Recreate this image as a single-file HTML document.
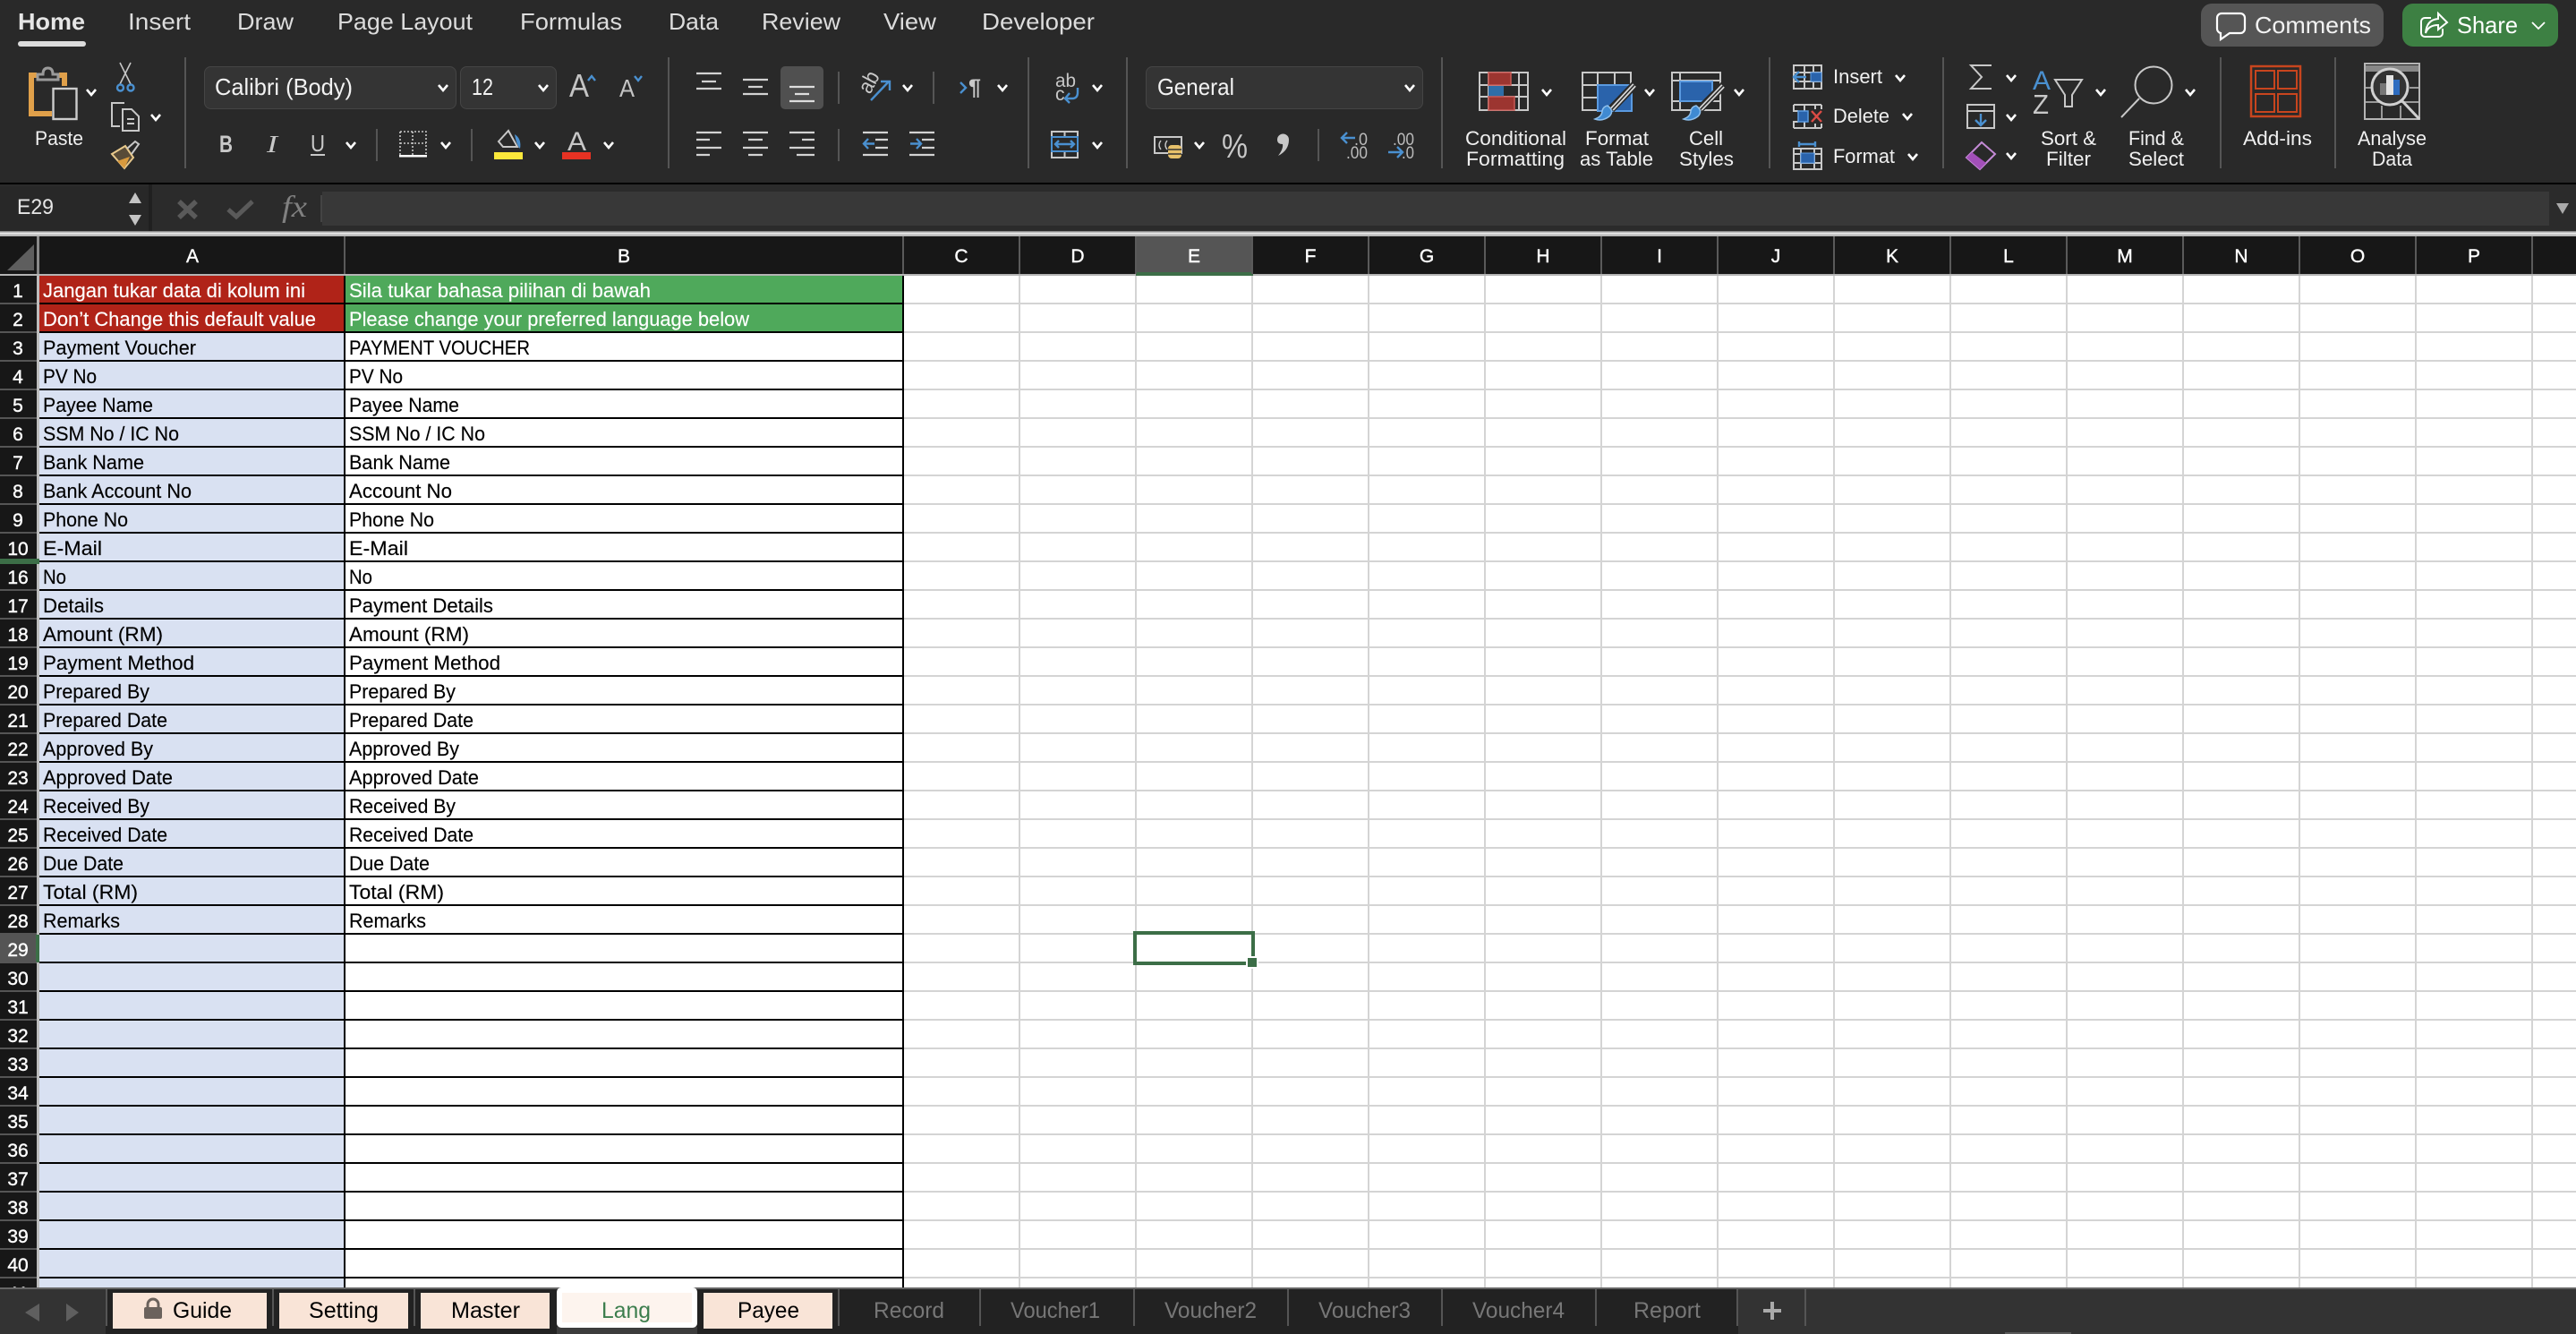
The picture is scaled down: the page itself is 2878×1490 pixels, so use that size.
<!DOCTYPE html>
<html><head><meta charset="utf-8"><title>Excel</title>
<style>
html,body{margin:0;padding:0;background:#fff;overflow:hidden}
svg{display:block}
text{font-family:"Liberation Sans",sans-serif}
.t{font-size:26px;fill:#dcdcdc;font-weight:400}
.r{font-size:22px;fill:#f0f0f0}
.c{font-size:22.5px;fill:#000;stroke:#000;stroke-width:.15}
.w{font-size:22.5px;fill:#fff;stroke:#fff;stroke-width:.15}
.h{font-size:21px;fill:#fff;text-anchor:middle;stroke:#fff;stroke-width:.4}
.s{fill:none;stroke:#c8c8c8;stroke-width:2}
.b{fill:none;stroke:#4a90d0;stroke-width:2.4}
.tb{font-size:25px;fill:#000}
.tg{font-size:25px;fill:#777}
.d{font-size:19px;fill:#bbb}
</style></head><body>
<svg xmlns="http://www.w3.org/2000/svg" width="2878" height="1490" viewBox="0 0 2878 1490">
<defs>
<path id="v" d="M-5 -3L0 3L5 -3" fill="none" stroke="#fff" stroke-width="2.6"/>
</defs>
<rect width="2878" height="1490" fill="#fff"/>

<!-- ribbon -->
<rect width="2878" height="204" fill="#292929"/>
<rect y="204" width="2878" height="2" fill="#000"/>
<rect y="206" width="2878" height="52" fill="#2b2b2b"/>
<text x="20" y="33" class="t" style="font-weight:700;fill:#e6e6e6" textLength="75" lengthAdjust="spacingAndGlyphs">Home</text>
<rect x="20" y="46" width="76" height="6" rx="3" fill="#dcdcdc"/>
<text x="143" y="33" class="t" textLength="70" lengthAdjust="spacingAndGlyphs">Insert</text>
<text x="265" y="33" class="t" textLength="63" lengthAdjust="spacingAndGlyphs">Draw</text>
<text x="377" y="33" class="t" textLength="151" lengthAdjust="spacingAndGlyphs">Page Layout</text>
<text x="581" y="33" class="t" textLength="114" lengthAdjust="spacingAndGlyphs">Formulas</text>
<text x="747" y="33" class="t" textLength="56" lengthAdjust="spacingAndGlyphs">Data</text>
<text x="851" y="33" class="t" textLength="88" lengthAdjust="spacingAndGlyphs">Review</text>
<text x="987" y="33" class="t" textLength="59" lengthAdjust="spacingAndGlyphs">View</text>
<text x="1097" y="33" class="t" textLength="126" lengthAdjust="spacingAndGlyphs">Developer</text>

<!-- comments/share -->
<rect x="2459" y="4" width="204" height="48" rx="12" fill="#555"/>
<path d="M2482 15H2503a5 5 0 0 1 5 5V32a5 5 0 0 1-5 5H2491L2481 44V37a5 5 0 0 1-4-5V20a5 5 0 0 1 5-5Z" fill="none" stroke="#fff" stroke-width="2.2"/>
<text x="2519" y="37" style="font-size:26px;fill:#f2f2f2" textLength="130" lengthAdjust="spacingAndGlyphs">Comments</text>
<rect x="2684" y="4" width="174" height="48" rx="12" fill="#3d8043"/>
<path d="M2716 20H2709a4 4 0 0 0-4 4V37a4 4 0 0 0 4 4H2725a4 4 0 0 0 4-4V32" fill="none" stroke="#fff" stroke-width="2"/>
<path d="M2724 15L2734 25L2724 33V28Q2713 28 2710 37Q2711 22 2724 21Z" fill="none" stroke="#fff" stroke-width="2"/>
<text x="2745" y="37" style="font-size:26px;fill:#fff" textLength="68" lengthAdjust="spacingAndGlyphs">Share</text>
<path d="M2829 25L2836 32L2843 25" fill="none" stroke="#fff" stroke-width="1.8"/>

<!-- separators -->
<g fill="#555">
<rect x="206" y="64" width="2" height="124"/><rect x="746" y="64" width="2" height="124"/>
<rect x="1148" y="64" width="2" height="124"/><rect x="1258" y="64" width="2" height="124"/>
<rect x="1610" y="64" width="2" height="124"/><rect x="1976" y="64" width="2" height="124"/>
<rect x="2170" y="64" width="2" height="124"/><rect x="2480" y="64" width="2" height="124"/>
<rect x="2608" y="64" width="2" height="124"/>
<rect x="420" y="144" width="2" height="36"/><rect x="526" y="144" width="2" height="36"/>
<rect x="936" y="80" width="2" height="36"/><rect x="936" y="144" width="2" height="36"/>
<rect x="1042" y="80" width="2" height="36"/><rect x="1472" y="144" width="2" height="36"/>
</g>

<!-- paste -->
<path d="M41 84H35V127H58M66 84H72V96" fill="none" stroke="#e0a04a" stroke-width="6"/>
<path d="M42 89V83H48Q48 76 53.500 76Q59 76 59 83H65V89Z" fill="none" stroke="#9a9a9a" stroke-width="3"/>
<rect x="59.500" y="99" width="26" height="34" fill="#292929" stroke="#ccc" stroke-width="2.4"/>
<use href="#v" x="102" y="103"/>
<text x="39" y="162" class="r" textLength="54" lengthAdjust="spacingAndGlyphs">Paste</text>
<path d="M134 70L146 94M146 70L134 94" fill="none" stroke="#c8c8c8" stroke-width="1.6"/>
<circle cx="134.500" cy="98" r="3.500" class="b"/><circle cx="146" cy="98" r="3.500" class="b"/>
<path d="M139 115H125V141H134M137 122H147L155 130V146H137ZM142 133H150M142 138H150" class="s"/>
<use href="#v" x="174" y="131"/>
<path d="M125 172L140 163L149 176L139 188Z" fill="#e6b469" fill-opacity=".25" stroke="#e8c98c" stroke-width="2"/>
<path d="M131 180L145 175L139 188Z" fill="#d99a3d"/>
<path d="M142 166L151 158L155 161L147 172" class="s"/>

<!-- font -->
<rect x="228.500" y="74.500" width="281" height="47" rx="7" fill="#343434" stroke="#454545"/>
<rect x="514.500" y="74.500" width="107" height="47" rx="7" fill="#343434" stroke="#454545"/>
<text x="240" y="106" style="font-size:26px;fill:#f2f2f2" textLength="154" lengthAdjust="spacingAndGlyphs">Calibri (Body)</text>
<text x="527" y="106" style="font-size:26px;fill:#f2f2f2" textLength="24" lengthAdjust="spacingAndGlyphs">12</text>
<use href="#v" x="495" y="98"/><use href="#v" x="607" y="98"/>
<text x="636" y="108" style="font-size:36px;fill:#c4c4c4" textLength="22" lengthAdjust="spacingAndGlyphs">A</text>
<path d="M657 90L661 85L665 90" class="b"/>
<text x="692" y="108" style="font-size:28px;fill:#c4c4c4" textLength="17" lengthAdjust="spacingAndGlyphs">A</text>
<path d="M709 85L713 90L717 85" class="b"/>
<text x="245" y="170" style="font-size:27px;font-weight:700;fill:#c8c8c8" textLength="15" lengthAdjust="spacingAndGlyphs">B</text>
<text x="298" y="170" style="font-size:27px;font-style:italic;fill:#c8c8c8;font-family:'Liberation Serif',serif" textLength="12" lengthAdjust="spacingAndGlyphs">I</text>
<text x="347" y="169" style="font-size:26px;fill:#c8c8c8" textLength="16" lengthAdjust="spacingAndGlyphs">U</text>
<rect x="347" y="172" width="16" height="2" fill="#c8c8c8"/>
<use href="#v" x="392" y="162"/>
<path d="M447 147H476V173M447 147V173M461 147V173M447 160H476" fill="none" stroke="#c8c8c8" stroke-width="1.600" stroke-dasharray="2 2"/>
<rect x="446" y="173" width="31" height="2.500" fill="#fff"/>
<use href="#v" x="498" y="162"/>
<path d="M557 158L568 146L578 164H562Z" class="s"/>
<path d="M575 150Q583 155 581 166Q577 162 575 150Z" fill="#4a90d0"/>
<rect x="552" y="170" width="32" height="8" fill="#fbe83b"/>
<use href="#v" x="603" y="162"/>
<text x="634" y="168" style="font-size:30px;fill:#c8c8c8" textLength="21" lengthAdjust="spacingAndGlyphs">A</text>
<rect x="628" y="170" width="32" height="8" fill="#e63223"/>
<use href="#v" x="680" y="162"/>

<!-- alignment -->
<g stroke="#d2d2d2" stroke-width="2.200" fill="none">
<path d="M778 82H806M784 91H800M778 99H806"/>
<path d="M830 89H858M836 97H852M830 105H858"/>
<path d="M778 148H806M778 156H793M778 165H806M778 173H793"/>
<path d="M830 148H858M836 156H852M830 165H858M836 173H852"/>
<path d="M882 148H910M896 156H910M882 165H910M890 173H910"/>
<path d="M964 148H992M978 156H992M978 165H992M964 173H992"/>
<path d="M1016 148H1044M1030 156H1044M1030 165H1044M1016 173H1044"/>
</g>
<rect x="872" y="74" width="48" height="48" rx="5" fill="#505050"/>
<path d="M882 97H910M888 105H904M882 113H910" stroke="#ddd" stroke-width="2.200"/>
<path d="M977 160.500H965M970 155L965 160.500L970 166M1017 160.500H1029M1024 155L1029 160.500L1024 166" class="b"/>
<text transform="translate(972,106) rotate(-62)" style="font-size:24px;fill:#c8c8c8" textLength="24" lengthAdjust="spacingAndGlyphs">ab</text>
<path d="M973 112L993 91M984 91H994V101" class="b"/>
<use href="#v" x="1014" y="98"/>
<path d="M1073 92L1079 98L1073 104" class="b"/>
<text x="1082" y="106" style="font-size:25px;fill:#c8c8c8;font-weight:700" textLength="14" lengthAdjust="spacingAndGlyphs">¶</text>
<use href="#v" x="1120" y="98"/>
<text x="1179" y="97" style="font-size:21px;fill:#c8c8c8" textLength="23" lengthAdjust="spacingAndGlyphs">ab</text>
<text x="1179" y="112" style="font-size:21px;fill:#c8c8c8">c</text>
<path d="M1204 98V103Q1204 110 1198 110H1190M1195 104L1190 110L1195 115" class="b"/>
<use href="#v" x="1226" y="98"/>
<path d="M1175 147H1204V176H1175ZM1189.500 147V153M1189.500 169V176" class="s"/>
<rect x="1175" y="153" width="29" height="16" fill="none" stroke="#4a90d0" stroke-width="2"/>
<path d="M1179 161H1200M1183 157L1179 161L1183 165M1196 157L1200 161L1196 165" class="b" stroke-width="1.800"/>
<use href="#v" x="1226" y="162"/>

<!-- number -->
<rect x="1280.500" y="74.500" width="309" height="47" rx="7" fill="#343434" stroke="#454545"/>
<text x="1293" y="106" style="font-size:26px;fill:#f2f2f2" textLength="86" lengthAdjust="spacingAndGlyphs">General</text>
<use href="#v" x="1575" y="98"/>
<path d="M1290 153H1320V171H1290Z" class="s"/>
<path d="M1297 157Q1293 162 1297 167M1304 157Q1300 162 1304 167" fill="none" stroke="#c8c8c8" stroke-width="1.400"/>
<rect x="1305" y="162" width="15" height="15" rx="4" fill="#e6c06a"/>
<path d="M1305 167H1320M1305 172H1320" stroke="#333" stroke-width="1.500"/>
<use href="#v" x="1340" y="162"/>
<text x="1365" y="176" style="font-size:38px;fill:#c8c8c8" textLength="29" lengthAdjust="spacingAndGlyphs">%</text>
<path d="M1427 156a6.500 6.500 0 1 1 13 0Q1440 168 1428 174Q1434 166 1433 161Q1427 161 1427 156Z" fill="#c8c8c8"/>
<path d="M1514 154H1499M1505 148L1499 154L1505 160" class="b"/>
<text x="1513" y="162" class="d" textLength="15" lengthAdjust="spacingAndGlyphs">.0</text>
<text x="1504" y="177" class="d" textLength="24" lengthAdjust="spacingAndGlyphs">.00</text>
<text x="1556" y="162" class="d" textLength="24" lengthAdjust="spacingAndGlyphs">.00</text>
<path d="M1551 170H1567M1561 164L1567 170L1561 176" class="b"/>
<text x="1566" y="177" class="d" textLength="14" lengthAdjust="spacingAndGlyphs">.0</text>

<!-- styles -->
<path d="M1653 81H1707V123H1653ZM1663 81V123M1697 81V123M1653 95H1707M1653 108H1707" class="s"/>
<rect x="1663" y="81" width="25" height="14" fill="#9c3530" stroke="#c85a55" stroke-width="1.500"/>
<rect x="1663" y="96" width="17" height="12" fill="#2f6ea8"/>
<rect x="1663" y="108" width="29" height="15" fill="#9c3530" stroke="#c85a55" stroke-width="1.500"/>
<use href="#v" x="1728" y="103"/>
<text x="1637" y="162" class="r" textLength="113" lengthAdjust="spacingAndGlyphs">Conditional</text>
<text x="1638" y="185" class="r" textLength="110" lengthAdjust="spacingAndGlyphs">Formatting</text>

<path d="M1768 81H1822V123H1768ZM1785 81V123M1804 81V123M1768 95H1822M1768 109H1822" class="s"/>
<rect x="1785" y="95" width="38" height="29" fill="#2a63ab" stroke="#5a9ae0" stroke-width="2"/>
<path d="M1827 94L1800 122" stroke="#292929" stroke-width="9"/>
<path d="M1826 95L1801 122" stroke="#d6d6d6" stroke-width="5"/>
<path d="M1826 95L1801 122" stroke="#292929" stroke-width="1.600"/>
<path d="M1796 118Q1804 124 1798 130Q1790 136 1782 133Q1790 130 1790 124Q1791 119 1796 118Z" fill="#3f8ad2" stroke="#8fc0ec" stroke-width="1.500"/>
<use href="#v" x="1843" y="103"/>
<text x="1771" y="162" class="r" textLength="71" lengthAdjust="spacingAndGlyphs">Format</text>
<text x="1765" y="185" class="r" textLength="82" lengthAdjust="spacingAndGlyphs">as Table</text>

<path d="M1868 81H1922V123H1868ZM1877 81V123M1868 113H1922M1868 90H1922" class="s"/>
<rect x="1877" y="91" width="36" height="22" fill="#2a63ab" stroke="#5a9ae0" stroke-width="2"/>
<path d="M1926 95L1899 122" stroke="#292929" stroke-width="9"/>
<path d="M1925 96L1900 122" stroke="#d6d6d6" stroke-width="5"/>
<path d="M1925 96L1900 122" stroke="#292929" stroke-width="1.600"/>
<path d="M1895 118Q1903 124 1897 130Q1889 136 1881 133Q1889 130 1889 124Q1890 119 1895 118Z" fill="#3f8ad2" stroke="#8fc0ec" stroke-width="1.500"/>
<use href="#v" x="1943" y="103"/>
<text x="1887" y="162" class="r" textLength="38" lengthAdjust="spacingAndGlyphs">Cell</text>
<text x="1876" y="185" class="r" textLength="61" lengthAdjust="spacingAndGlyphs">Styles</text>

<!-- cells group -->
<path d="M2004 73H2035V99H2004ZM2016 73V99M2026 73V99M2004 81H2035M2004 91H2035" class="s"/>
<rect x="2023" y="81" width="12" height="10" fill="#2a63ab" stroke="#5a9ae0"/>
<path d="M2018 86H2004M2010 80L2004 86L2010 92" class="b"/>
<text x="2048" y="93" class="r" textLength="55" lengthAdjust="spacingAndGlyphs">Insert</text><use href="#v" x="2123" y="87"/>
<path d="M2004 117H2035M2004 143H2035M2004 117V124H2009M2004 143V136H2009M2016 117V124M2016 136V143M2028 117V122M2028 138V143M2035 117V122M2035 138V143" class="s"/>
<rect x="2009" y="124" width="11" height="12" fill="#2a63ab" stroke="#5a9ae0" stroke-width="1.500"/>
<path d="M2024 124L2035 136M2035 124L2024 136" stroke="#dc4b45" stroke-width="2.400"/>
<text x="2048" y="137" class="r" textLength="63" lengthAdjust="spacingAndGlyphs">Delete</text><use href="#v" x="2131" y="130"/>
<path d="M2004 166H2035V189H2004ZM2012 166V189M2027 166V189M2004 172H2035M2004 182H2035" class="s"/>
<rect x="2012" y="171" width="15" height="11" fill="#2a63ab" stroke="#5a9ae0"/>
<path d="M2010 161H2028M2010 158V164M2028 158V164" class="b" stroke-width="1.800"/>
<text x="2048" y="182" class="r" textLength="69" lengthAdjust="spacingAndGlyphs">Format</text><use href="#v" x="2137" y="175"/>

<!-- editing -->
<path d="M2225 73H2202L2214 86L2202 99H2225" class="s"/>
<use href="#v" x="2247" y="87"/>
<path d="M2198 117H2228V143H2198ZM2198 124H2228" class="s"/>
<path d="M2213 127V140M2207 134L2213 140L2219 134" class="b"/>
<use href="#v" x="2247" y="131"/>
<path d="M2214 159L2229 172L2212 189L2197 176Z" fill="none" stroke="#c48ad6" stroke-width="2"/>
<path d="M2203 170L2219 182L2212 189L2197 176Z" fill="#a24fb8"/>
<use href="#v" x="2247" y="174"/>
<text x="2271" y="100" style="font-size:30px;fill:#4a90d0" textLength="20" lengthAdjust="spacingAndGlyphs">A</text>
<text x="2271" y="127" style="font-size:31px;fill:#c8c8c8" textLength="18" lengthAdjust="spacingAndGlyphs">Z</text>
<path d="M2296 89H2326L2315 106V119H2307V106Z" class="s"/>
<use href="#v" x="2347" y="103"/>
<text x="2280" y="162" class="r" textLength="62" lengthAdjust="spacingAndGlyphs">Sort &amp;</text>
<text x="2286" y="185" class="r" textLength="50" lengthAdjust="spacingAndGlyphs">Filter</text>
<circle cx="2406" cy="95" r="20.500" class="s"/>
<path d="M2390 110L2370 131" class="s"/>
<use href="#v" x="2447" y="103"/>
<text x="2378" y="162" class="r" textLength="62" lengthAdjust="spacingAndGlyphs">Find &amp;</text>
<text x="2378" y="185" class="r" textLength="62" lengthAdjust="spacingAndGlyphs">Select</text>

<!-- add-ins / analyse -->
<rect x="2515" y="74" width="55" height="56" fill="none" stroke="#c8451e" stroke-width="2.500"/>
<g fill="none" stroke="#c8451e" stroke-width="2">
<rect x="2520" y="79" width="21" height="20"/><rect x="2545" y="79" width="21" height="20"/>
<rect x="2520" y="105" width="21" height="20"/><rect x="2545" y="105" width="21" height="20"/>
</g>
<text x="2506" y="162" class="r" textLength="77" lengthAdjust="spacingAndGlyphs">Add-ins</text>
<rect x="2642" y="71" width="61" height="62" fill="none" stroke="#b5b5b5" stroke-width="2"/>
<rect x="2643" y="73" width="59" height="7" fill="#888"/>
<path d="M2643 98H2650M2692 98H2702M2643 114H2702M2661 118V132M2682 118V132" stroke="#999" stroke-width="2"/>
<circle cx="2670" cy="97" r="20" fill="#333" stroke="#d0d0d0" stroke-width="3"/>
<rect x="2659" y="93" width="7" height="13" fill="#777"/>
<rect x="2666" y="84" width="8" height="22" fill="#e4e4e4"/>
<rect x="2674" y="89" width="7" height="17" fill="#2d6cc0"/>
<path d="M2684 113L2703 133" stroke="#d0d0d0" stroke-width="3"/>
<text x="2634" y="162" class="r" textLength="77" lengthAdjust="spacingAndGlyphs">Analyse</text>
<text x="2650" y="185" class="r" textLength="45" lengthAdjust="spacingAndGlyphs">Data</text>

<!-- formula bar -->
<rect x="0" y="208" width="166" height="50" fill="#282828"/>
<rect x="166" y="206" width="4" height="52" fill="#202020"/>
<text x="19" y="239" style="font-size:24px;fill:#e6e6e6" textLength="41" lengthAdjust="spacingAndGlyphs">E29</text>
<path d="M151 215L158 227H144Z" fill="#c4c4c4"/><path d="M151 252L158 240H144Z" fill="#c4c4c4"/>
<path d="M200 225L219 243M219 225L200 243" stroke="#5a5a5a" stroke-width="5.500"/>
<path d="M255 234L264 242L282 225" stroke="#5a5a5a" stroke-width="5" fill="none"/>
<text x="315" y="242" style="font-family:'Liberation Serif',serif;font-style:italic;font-size:34px;fill:#808080" textLength="28" lengthAdjust="spacingAndGlyphs">fx</text>
<rect x="358" y="218" width="2" height="30" fill="#444"/>
<rect x="360" y="214" width="2488" height="38" fill="#383838"/>
<path d="M2856 227H2870L2863 239Z" fill="#aaa"/>

<!-- line above headers -->
<rect y="258" width="2878" height="1.500" fill="#8a8a8a"/>
<rect y="259.500" width="2878" height="2" fill="#e8e8e8"/>
<rect y="261.500" width="2878" height="2.500" fill="#bbb"/>

<!-- column header -->
<rect y="264" width="2878" height="42" fill="#171717"/>
<rect x="1270" y="264" width="130" height="42" fill="#555"/>
<rect y="306" width="2878" height="2" fill="#b4b4b4"/>
<rect x="1269" y="304" width="131" height="4" fill="#3c6e47"/>
<path d="M8 302L38 273V302Z" fill="#5e5e5e"/>
<g fill="#5a5a5a">
<rect x="41" y="264" width="3" height="42" fill="#8a8a8a"/>
<rect x="384" y="264" width="2" height="42"/><rect x="1008" y="264" width="2" height="42"/>
<rect x="1138" y="264" width="2" height="42"/><rect x="1268" y="264" width="2" height="42"/>
<rect x="1398" y="264" width="2" height="42"/><rect x="1528" y="264" width="2" height="42"/>
<rect x="1658" y="264" width="2" height="42"/><rect x="1788" y="264" width="2" height="42"/>
<rect x="1918" y="264" width="2" height="42"/><rect x="2048" y="264" width="2" height="42"/>
<rect x="2178" y="264" width="2" height="42"/><rect x="2308" y="264" width="2" height="42"/>
<rect x="2438" y="264" width="2" height="42"/><rect x="2568" y="264" width="2" height="42"/>
<rect x="2698" y="264" width="2" height="42"/><rect x="2828" y="264" width="2" height="42"/>
</g>
<g>
<text x="215" y="293" class="h">A</text><text x="697" y="293" class="h">B</text>
<text x="1074" y="293" class="h">C</text><text x="1204" y="293" class="h">D</text>
<text x="1334" y="293" class="h">E</text><text x="1464" y="293" class="h">F</text>
<text x="1594" y="293" class="h">G</text><text x="1724" y="293" class="h">H</text>
<text x="1854" y="293" class="h">I</text><text x="1984" y="293" class="h">J</text>
<text x="2114" y="293" class="h">K</text><text x="2244" y="293" class="h">L</text>
<text x="2374" y="293" class="h">M</text><text x="2504" y="293" class="h">N</text>
<text x="2634" y="293" class="h">O</text><text x="2764" y="293" class="h">P</text>
</g>

<!-- row header column -->
<rect y="308" width="41" height="1130" fill="#171717"/>
<rect x="41" y="308" width="3" height="1130" fill="#bdbdbd"/>
<rect y="1044" width="40" height="31" fill="#555"/>
<rect x="40" y="1044" width="4" height="31" fill="#3c6e47"/>
<path stroke="#555" stroke-width="2" fill="none" d="M0 339H41M0 371H41M0 403H41M0 435H41M0 467H41M0 499H41M0 531H41M0 563H41M0 595H41M0 659H41M0 691H41M0 723H41M0 755H41M0 787H41M0 819H41M0 851H41M0 883H41M0 915H41M0 947H41M0 979H41M0 1011H41M0 1043H41M0 1075H41M0 1107H41M0 1139H41M0 1171H41M0 1203H41M0 1235H41M0 1267H41M0 1299H41M0 1331H41M0 1363H41M0 1395H41M0 1427H41"/>
<rect y="624" width="44" height="6" fill="#3c6e47"/>
<g>
<text x="20" y="332" class="h">1</text><text x="20" y="364" class="h">2</text><text x="20" y="396" class="h">3</text>
<text x="20" y="428" class="h">4</text><text x="20" y="460" class="h">5</text><text x="20" y="492" class="h">6</text>
<text x="20" y="524" class="h">7</text><text x="20" y="556" class="h">8</text><text x="20" y="588" class="h">9</text>
<text x="20" y="620" class="h">10</text><text x="20" y="652" class="h">16</text><text x="20" y="684" class="h">17</text>
<text x="20" y="716" class="h">18</text><text x="20" y="748" class="h">19</text><text x="20" y="780" class="h">20</text>
<text x="20" y="812" class="h">21</text><text x="20" y="844" class="h">22</text><text x="20" y="876" class="h">23</text>
<text x="20" y="908" class="h">24</text><text x="20" y="940" class="h">25</text><text x="20" y="972" class="h">26</text>
<text x="20" y="1004" class="h">27</text><text x="20" y="1036" class="h">28</text><text x="20" y="1068" class="h">29</text>
<text x="20" y="1100" class="h">30</text><text x="20" y="1132" class="h">31</text><text x="20" y="1164" class="h">32</text>
<text x="20" y="1196" class="h">33</text><text x="20" y="1228" class="h">34</text><text x="20" y="1260" class="h">35</text>
<text x="20" y="1292" class="h">36</text><text x="20" y="1324" class="h">37</text><text x="20" y="1356" class="h">38</text>
<text x="20" y="1388" class="h">39</text><text x="20" y="1420" class="h">40</text><text x="20" y="1452" class="h">41</text>
</g>

<!-- grid -->
<path stroke="#d4d4d4" stroke-width="2" fill="none" d="M1010 339H2878M1010 371H2878M1010 403H2878M1010 435H2878M1010 467H2878M1010 499H2878M1010 531H2878M1010 563H2878M1010 595H2878M1010 627H2878M1010 659H2878M1010 691H2878M1010 723H2878M1010 755H2878M1010 787H2878M1010 819H2878M1010 851H2878M1010 883H2878M1010 915H2878M1010 947H2878M1010 979H2878M1010 1011H2878M1010 1043H2878M1010 1075H2878M1010 1107H2878M1010 1139H2878M1010 1171H2878M1010 1203H2878M1010 1235H2878M1010 1267H2878M1010 1299H2878M1010 1331H2878M1010 1363H2878M1010 1395H2878M1010 1427H2878M1139 308V1438M1269 308V1438M1399 308V1438M1529 308V1438M1659 308V1438M1789 308V1438M1919 308V1438M2049 308V1438M2179 308V1438M2309 308V1438M2439 308V1438M2569 308V1438M2699 308V1438M2829 308V1438"/>

<!-- A/B cells -->
<rect x="44" y="308" width="340" height="63" fill="#b02318"/>
<rect x="386" y="308" width="622" height="63" fill="#4fa95b"/>
<rect x="44" y="371" width="340" height="1067" fill="#d9e1f2"/>
<rect x="386" y="371" width="622" height="1067" fill="#fff"/>
<path stroke="#000" stroke-width="2" fill="none" d="M44 339H1009M44 371H1009M44 403H1009M44 435H1009M44 467H1009M44 499H1009M44 531H1009M44 563H1009M44 595H1009M44 627H1009M44 659H1009M44 691H1009M44 723H1009M44 755H1009M44 787H1009M44 819H1009M44 851H1009M44 883H1009M44 915H1009M44 947H1009M44 979H1009M44 1011H1009M44 1043H1009M44 1075H1009M44 1107H1009M44 1139H1009M44 1171H1009M44 1203H1009M44 1235H1009M44 1267H1009M44 1299H1009M44 1331H1009M44 1363H1009M44 1395H1009M44 1427H1009M385 308V1438M1009 308V1438"/>

<text x="48" y="332" class="w" textLength="293" lengthAdjust="spacingAndGlyphs">Jangan tukar data di kolum ini</text>
<text x="48" y="364" class="w" textLength="305" lengthAdjust="spacingAndGlyphs">Don’t Change this default value</text>
<text x="48" y="396" class="c" textLength="171" lengthAdjust="spacingAndGlyphs">Payment Voucher</text>
<text x="48" y="428" class="c" textLength="60" lengthAdjust="spacingAndGlyphs">PV No</text>
<text x="48" y="460" class="c" textLength="123" lengthAdjust="spacingAndGlyphs">Payee Name</text>
<text x="48" y="492" class="c" textLength="152" lengthAdjust="spacingAndGlyphs">SSM No / IC No</text>
<text x="48" y="524" class="c" textLength="113" lengthAdjust="spacingAndGlyphs">Bank Name</text>
<text x="48" y="556" class="c" textLength="166" lengthAdjust="spacingAndGlyphs">Bank Account No</text>
<text x="48" y="588" class="c" textLength="95" lengthAdjust="spacingAndGlyphs">Phone No</text>
<text x="48" y="620" class="c" textLength="66" lengthAdjust="spacingAndGlyphs">E-Mail</text>
<text x="48" y="652" class="c" textLength="26" lengthAdjust="spacingAndGlyphs">No</text>
<text x="48" y="684" class="c" textLength="68" lengthAdjust="spacingAndGlyphs">Details</text>
<text x="48" y="716" class="c" textLength="134" lengthAdjust="spacingAndGlyphs">Amount (RM)</text>
<text x="48" y="748" class="c" textLength="169" lengthAdjust="spacingAndGlyphs">Payment Method</text>
<text x="48" y="780" class="c" textLength="119" lengthAdjust="spacingAndGlyphs">Prepared By</text>
<text x="48" y="812" class="c" textLength="139" lengthAdjust="spacingAndGlyphs">Prepared Date</text>
<text x="48" y="844" class="c" textLength="123" lengthAdjust="spacingAndGlyphs">Approved By</text>
<text x="48" y="876" class="c" textLength="145" lengthAdjust="spacingAndGlyphs">Approved Date</text>
<text x="48" y="908" class="c" textLength="119" lengthAdjust="spacingAndGlyphs">Received By</text>
<text x="48" y="940" class="c" textLength="139" lengthAdjust="spacingAndGlyphs">Received Date</text>
<text x="48" y="972" class="c" textLength="90" lengthAdjust="spacingAndGlyphs">Due Date</text>
<text x="48" y="1004" class="c" textLength="106" lengthAdjust="spacingAndGlyphs">Total (RM)</text>
<text x="48" y="1036" class="c" textLength="86" lengthAdjust="spacingAndGlyphs">Remarks</text>

<text x="390" y="332" class="w" textLength="337" lengthAdjust="spacingAndGlyphs">Sila tukar bahasa pilihan di bawah</text>
<text x="390" y="364" class="w" textLength="447" lengthAdjust="spacingAndGlyphs">Please change your preferred language below</text>
<text x="390" y="396" class="c" textLength="202" lengthAdjust="spacingAndGlyphs">PAYMENT VOUCHER</text>
<text x="390" y="428" class="c" textLength="60" lengthAdjust="spacingAndGlyphs">PV No</text>
<text x="390" y="460" class="c" textLength="123" lengthAdjust="spacingAndGlyphs">Payee Name</text>
<text x="390" y="492" class="c" textLength="152" lengthAdjust="spacingAndGlyphs">SSM No / IC No</text>
<text x="390" y="524" class="c" textLength="113" lengthAdjust="spacingAndGlyphs">Bank Name</text>
<text x="390" y="556" class="c" textLength="115" lengthAdjust="spacingAndGlyphs">Account No</text>
<text x="390" y="588" class="c" textLength="95" lengthAdjust="spacingAndGlyphs">Phone No</text>
<text x="390" y="620" class="c" textLength="66" lengthAdjust="spacingAndGlyphs">E-Mail</text>
<text x="390" y="652" class="c" textLength="26" lengthAdjust="spacingAndGlyphs">No</text>
<text x="390" y="684" class="c" textLength="161" lengthAdjust="spacingAndGlyphs">Payment Details</text>
<text x="390" y="716" class="c" textLength="134" lengthAdjust="spacingAndGlyphs">Amount (RM)</text>
<text x="390" y="748" class="c" textLength="169" lengthAdjust="spacingAndGlyphs">Payment Method</text>
<text x="390" y="780" class="c" textLength="119" lengthAdjust="spacingAndGlyphs">Prepared By</text>
<text x="390" y="812" class="c" textLength="139" lengthAdjust="spacingAndGlyphs">Prepared Date</text>
<text x="390" y="844" class="c" textLength="123" lengthAdjust="spacingAndGlyphs">Approved By</text>
<text x="390" y="876" class="c" textLength="145" lengthAdjust="spacingAndGlyphs">Approved Date</text>
<text x="390" y="908" class="c" textLength="119" lengthAdjust="spacingAndGlyphs">Received By</text>
<text x="390" y="940" class="c" textLength="139" lengthAdjust="spacingAndGlyphs">Received Date</text>
<text x="390" y="972" class="c" textLength="90" lengthAdjust="spacingAndGlyphs">Due Date</text>
<text x="390" y="1004" class="c" textLength="106" lengthAdjust="spacingAndGlyphs">Total (RM)</text>
<text x="390" y="1036" class="c" textLength="86" lengthAdjust="spacingAndGlyphs">Remarks</text>

<!-- selection -->
<path d="M1392 1076H1268V1042H1400V1068" fill="none" stroke="#3c6e47" stroke-width="4"/>
<rect x="1392" y="1068" width="14" height="14" fill="#fff"/>
<rect x="1394" y="1070" width="10" height="10" fill="#3c6e47"/>

<!-- sheet tabs -->
<rect y="1438" width="2878" height="52" fill="#333"/>
<rect x="118" y="1440" width="1824" height="50" fill="#222"/>
<rect y="1438" width="2878" height="2" fill="#666"/>
<path d="M44 1456V1476L28 1466Z" fill="#5f5f5f"/><path d="M74 1456V1476L88 1466Z" fill="#5f5f5f"/>
<g fill="#555">
<rect x="118" y="1440" width="2" height="41"/><rect x="304" y="1440" width="2" height="41"/><rect x="462" y="1440" width="2" height="41"/><rect x="936" y="1440" width="2" height="41"/>
<rect x="1094" y="1440" width="2" height="41"/><rect x="1266" y="1440" width="2" height="41"/><rect x="1438" y="1440" width="2" height="41"/><rect x="1610" y="1440" width="2" height="41"/><rect x="1782" y="1440" width="2" height="41"/><rect x="1940" y="1440" width="2" height="41"/><rect x="2016" y="1440" width="2" height="41"/>
</g>
<g fill="#f9e4d7">
<rect x="126" y="1444" width="172" height="40"/><rect x="312" y="1444" width="144" height="40"/><rect x="470" y="1444" width="144" height="40"/><rect x="786" y="1444" width="144" height="40"/>
</g>
<rect x="622" y="1482" width="157" height="8" fill="#3c3c3c"/>
<rect x="622" y="1438" width="157" height="45" rx="5" fill="#fff"/>
<rect x="628" y="1444" width="145" height="33" fill="#fdf4ee"/>
<path d="M165 1462V1457a6 6 0 0 1 12 0V1462" fill="none" stroke="#6b625c" stroke-width="3"/>
<rect x="161" y="1460" width="20" height="13" rx="2" fill="#6b625c"/>
<text x="193" y="1472" class="tb" textLength="66" lengthAdjust="spacingAndGlyphs">Guide</text>
<text x="345" y="1472" class="tb" textLength="78" lengthAdjust="spacingAndGlyphs">Setting</text>
<text x="504" y="1472" class="tb" textLength="77" lengthAdjust="spacingAndGlyphs">Master</text>
<text x="672" y="1472" class="tb" style="fill:#3c7d4d" textLength="55" lengthAdjust="spacingAndGlyphs">Lang</text>
<text x="824" y="1472" class="tb" textLength="69" lengthAdjust="spacingAndGlyphs">Payee</text>
<text x="976" y="1472" class="tg" textLength="79" lengthAdjust="spacingAndGlyphs">Record</text>
<text x="1129" y="1472" class="tg" textLength="100" lengthAdjust="spacingAndGlyphs">Voucher1</text>
<text x="1301" y="1472" class="tg" textLength="103" lengthAdjust="spacingAndGlyphs">Voucher2</text>
<text x="1473" y="1472" class="tg" textLength="103" lengthAdjust="spacingAndGlyphs">Voucher3</text>
<text x="1645" y="1472" class="tg" textLength="103" lengthAdjust="spacingAndGlyphs">Voucher4</text>
<text x="1825" y="1472" class="tg" textLength="75" lengthAdjust="spacingAndGlyphs">Report</text>
<path d="M1970 1464H1990M1980 1454V1474" stroke="#aaa" stroke-width="4"/>
<rect x="2240" y="1488" width="74" height="2" fill="#5a5a5a"/>
</svg>
</body></html>
